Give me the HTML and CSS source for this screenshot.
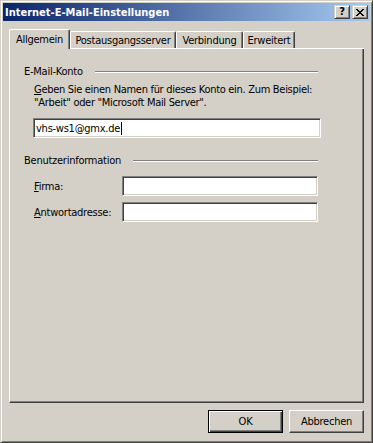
FILE: index.html
```html
<!DOCTYPE html>
<html lang="de">

<head>
    <meta charset="UTF-8">
    <title>Internet-E-Mail-Einstellungen</title>
    <link rel="stylesheet" href="styles.css">
</head>

<body>
    <div class="window">
        <div class="titlebar">
            <span class="title">Internet-E-Mail-Einstellungen</span>
            <div class="caption-btns">
                <span class="cbtn help">?</span>
                <span class="cbtn close">
                    <svg width="8" height="7" viewBox="0 0 8 7">
                        <path d="M0 0h2v1h-2zM6 0h2v1h-2zM1 1h2v1h-2zM5 1h2v1h-2zM2 2h4v1h-4zM3 3h2v1h-2zM2 4h4v1h-4zM1 5h2v1h-2zM5 5h2v1h-2zM0 6h2v1h-2zM6 6h2v1h-2z" fill="#000"/>
                    </svg>
                </span>
            </div>
        </div>

        <div class="content">
            <div class="tabs">
                <div class="tab active tab-general">Allgemein</div>
                <div class="tab tab-smtp">Postausgangsserver</div>
                <div class="tab tab-conn">Verbindung</div>
                <div class="tab tab-adv">Erweitert</div>
            </div>

            <div class="panel">
                <div class="group-head">
                    <span>E-Mail-Konto</span>
                    <span class="group-line"></span>
                </div>
                <p class="desc"><u>G</u>eben Sie einen Namen für dieses Konto ein. Zum Beispiel:<br>"Arbeit" oder "Microsoft Mail Server".</p>
                <div class="field account"><span>vhs-ws1@gmx.de</span><span class="caret"></span></div>

                <div class="group-head second">
                    <span>Benutzerinformation</span>
                    <span class="group-line"></span>
                </div>
                <div class="form-row first">
                    <label><u>F</u>irma:</label>
                    <div class="field"></div>
                </div>
                <div class="form-row">
                    <label><u>A</u>ntwortadresse:</label>
                    <div class="field"></div>
                </div>
            </div>

            <div class="buttons">
                <button class="btn default">OK</button>
                <button class="btn">Abbrechen</button>
            </div>
        </div>
    </div>
</body>

</html>
```

FILE: styles.css
```css
* {
    box-sizing: border-box;
}

body {
    margin: 0;
    background-color: #d4d0c8;
    font-family: 'DejaVu Sans Condensed', 'Liberation Sans', sans-serif;
    font-size: 11px;
    letter-spacing: -0.25px;
    color: #000;
}

.window {
    width: 373px;
    height: 443px;
    display: flex;
    flex-direction: column;
    padding: 2px;
    background-color: #d4d0c8;
    border: 1px solid;
    border-color: #d4d0c8 #404040 #404040 #d4d0c8;
    box-shadow: inset 1px 1px #fff, inset -1px -1px #808080;
}

.titlebar {
    height: 18px;
    display: flex;
    align-items: center;
    padding-left: 2px;
    background: linear-gradient(to right, #0a246a, #a6caf0);
    color: #fff;
    font-weight: bold;
    letter-spacing: 0;
}

.caption-btns {
    display: flex;
    gap: 2px;
    margin-left: auto;
    margin-right: 2px;
}

.cbtn {
    width: 16px;
    height: 14px;
    display: flex;
    align-items: center;
    justify-content: center;
    background-color: #d4d0c8;
    color: #000;
    border: 1px solid;
    border-color: #d4d0c8 #404040 #404040 #d4d0c8;
    box-shadow: inset 1px 1px #fff, inset -1px -1px #808080;
}

.help {
    font-size: 11px;
    font-weight: bold;
    line-height: 12px;
}

.content {
    flex: 1;
    display: flex;
    flex-direction: column;
    padding: 8px 6px 7px 6px;
}

.tabs {
    height: 20px;
    display: flex;
    align-items: flex-end;
    border-bottom: 1px solid #fff;
}

.tab {
    height: 17px;
    display: flex;
    align-items: center;
    justify-content: center;
    background-color: #d4d0c8;
    border-top: 1px solid #fff;
    border-left: 1px solid #fff;
    border-right: 1px solid #404040;
    border-radius: 2px 2px 0 0;
    box-shadow: inset -1px 0 #808080;
    padding-top: 1px;
}

.tab.active {
    height: 20px;
    margin-bottom: -1px;
    padding-bottom: 2px;
}

.tab-general { width: 61px; }
.tab-smtp { width: 106px; }
.tab-conn { width: 67px; }
.tab-adv { width: 52px; }

.panel {
    flex: 1;
    padding: 16px 45px 0 14px;
    border-left: 1px solid #fff;
    border-right: 1px solid #404040;
    border-bottom: 1px solid #404040;
    box-shadow: inset -1px -1px #808080;
}

.group-head {
    height: 13px;
    line-height: 13px;
    display: flex;
    align-items: center;
    gap: 12px;
}

.group-head.second {
    margin-top: 16px;
}

.group-line {
    flex: 1;
    height: 2px;
    border-top: 1px solid #808080;
    border-bottom: 1px solid #fff;
}

.desc {
    margin: 5px 0 0 10px;
    line-height: 13px;
    white-space: nowrap;
    letter-spacing: -0.3px;
}

.field {
    height: 20px;
    display: flex;
    align-items: center;
    padding-left: 1px;
    background-color: #fff;
    border: 1px solid;
    border-color: #808080 #fff #fff #808080;
    box-shadow: inset 1px 1px #404040, inset -1px -1px #d4d0c8;
}

.field span {
    padding-left: 1px;
}

.field.account {
    width: 288px;
    margin: 9px 0 0 9px;
}

.caret {
    width: 1px;
    height: 13px;
    margin-left: 1px;
    padding: 0 !important;
    background-color: #000;
}

.form-row {
    height: 20px;
    display: flex;
    align-items: center;
    margin: 6px 0 0 10px;
}

.form-row.first {
    margin-top: 9px;
}

.form-row label {
    width: 89px;
}

.form-row .field {
    width: 197px;
}

.buttons {
    display: flex;
    justify-content: flex-end;
    gap: 6px;
    margin-top: 7px;
}

.btn {
    width: 75px;
    height: 23px;
    padding: 0;
    font-family: 'DejaVu Sans Condensed', 'Liberation Sans', sans-serif;
    font-size: 11px;
    letter-spacing: -0.25px;
    color: #000;
    background-color: #d4d0c8;
    border: 1px solid;
    border-color: #fff #404040 #404040 #fff;
    box-shadow: inset -1px -1px #808080;
}

.btn.default {
    border: 1px solid #000;
    box-shadow: inset 1px 1px #fff, inset -1px -1px #404040, inset -2px -2px #808080;
}
```
